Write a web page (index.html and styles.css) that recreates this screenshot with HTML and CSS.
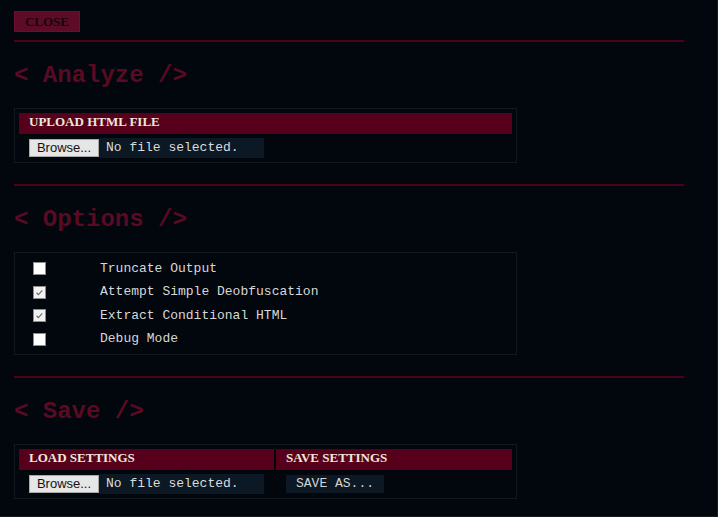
FILE: index.html
```html
<!DOCTYPE html>
<html>
<head>
<meta charset="utf-8">
<link rel="stylesheet" href="styles.css">
</head>
<body>
<div class="wrap">
  <button class="close">CLOSE</button>
  <div class="rule"></div>

  <h2 class="title">&lt; Analyze /&gt;</h2>
  <div class="box">
    <div class="bar">UPLOAD HTML FILE</div>
    <div class="filerow">
      <span class="browse">Browse...</span><span class="filetext">No file selected.</span>
    </div>
  </div>
  <div class="rule"></div>

  <h2 class="title">&lt; Options /&gt;</h2>
  <div class="box opts">
    <div class="opt"><span class="cb"></span><span class="lbl">Truncate Output</span></div>
    <div class="opt"><span class="cb on"><svg viewBox="0 0 13 13" width="11" height="11"><path d="M3 6.8 L5.2 9 L9.8 4" fill="none" stroke="#6a6a6a" stroke-width="1.3"/></svg></span><span class="lbl">Attempt Simple Deobfuscation</span></div>
    <div class="opt"><span class="cb on"><svg viewBox="0 0 13 13" width="11" height="11"><path d="M3 6.8 L5.2 9 L9.8 4" fill="none" stroke="#6a6a6a" stroke-width="1.3"/></svg></span><span class="lbl">Extract Conditional HTML</span></div>
    <div class="opt"><span class="cb"></span><span class="lbl">Debug Mode</span></div>
  </div>
  <div class="rule"></div>

  <h2 class="title">&lt; Save /&gt;</h2>
  <div class="box">
    <div class="grid">
      <div class="bar">LOAD SETTINGS</div>
      <div class="bar">SAVE SETTINGS</div>
      <div class="filerow">
        <span class="browse">Browse...</span><span class="filetext">No file selected.</span>
      </div>
      <div class="filerow">
        <span class="saveas">SAVE AS...</span>
      </div>
    </div>
  </div>
</div>
</body>
</html>
```

FILE: styles.css
```css
html {
  height: 100%;
  background: #02060d;
  box-shadow: inset -1px -1px 0 #181b21;
}
body {
  margin: 0;
  padding: 11px 14px;
  font-family: "Liberation Serif", serif;
  color: #d8d8d8;
}
.wrap {
  width: 670px;
}
.close {
  display: block;
  box-sizing: border-box;
  width: 66px;
  height: 21px;
  margin: 0;
  padding: 0;
  background: #5e0b27;
  border: 1px solid #68102e;
  color: #16040c;
  font: bold 13px/19px "Liberation Serif", serif;
  text-align: center;
}
.rule {
  height: 2px;
  margin-top: 8px;
  background: #4e0018;
}
.box + .rule {
  margin-top: 21px;
}
.title {
  margin: 20px 0 18px;
  font: bold 24px/28px "Liberation Mono", monospace;
  color: #5a0a22;
}
.box {
  box-sizing: border-box;
  width: 503px;
  border: 1px solid #0e1923;
  padding: 4px;
}
.bar {
  height: 21px;
  padding-left: 10px;
  background: #56001b;
  color: #efe7da;
  font: bold 13px/18px "Liberation Serif", serif;
}
.filerow {
  display: flex;
  align-items: center;
  height: 20px;
  margin-top: 4px;
  padding-left: 10px;
}
.browse {
  box-sizing: border-box;
  width: 70px;
  height: 18px;
  background: #e6e6e6;
  border: 1px solid #a9a9a9;
  color: #111;
  font: 13px/16px "Liberation Sans", sans-serif;
  text-align: center;
}
.filetext {
  box-sizing: border-box;
  width: 165px;
  height: 20px;
  padding-left: 7px;
  background: #0c1823;
  color: #dcdcdc;
  font: 13px/20px "Liberation Mono", monospace;
}
.grid {
  display: grid;
  grid-template-columns: 255px 236px;
  column-gap: 2px;
}
.saveas {
  box-sizing: border-box;
  width: 98px;
  height: 18px;
  background: #0c1823;
  color: #d4d4d4;
  font: 13px/18px "Liberation Mono", monospace;
  text-align: center;
}
.opts {
  padding: 4px 0 3px;
}
.opt {
  display: flex;
  align-items: center;
  height: 23.5px;
}
.cb {
  box-sizing: border-box;
  display: flex;
  align-items: center;
  justify-content: center;
  width: 13px;
  height: 13px;
  margin-left: 18px;
  background: #ffffff;
  border: 1px solid #8c8c8c;
}
.cb.on {
  background: #f2f2f2;
}
.lbl {
  margin-left: 54px;
  font: 13px/16px "Liberation Mono", monospace;
  color: #d8d8d8;
}
```
